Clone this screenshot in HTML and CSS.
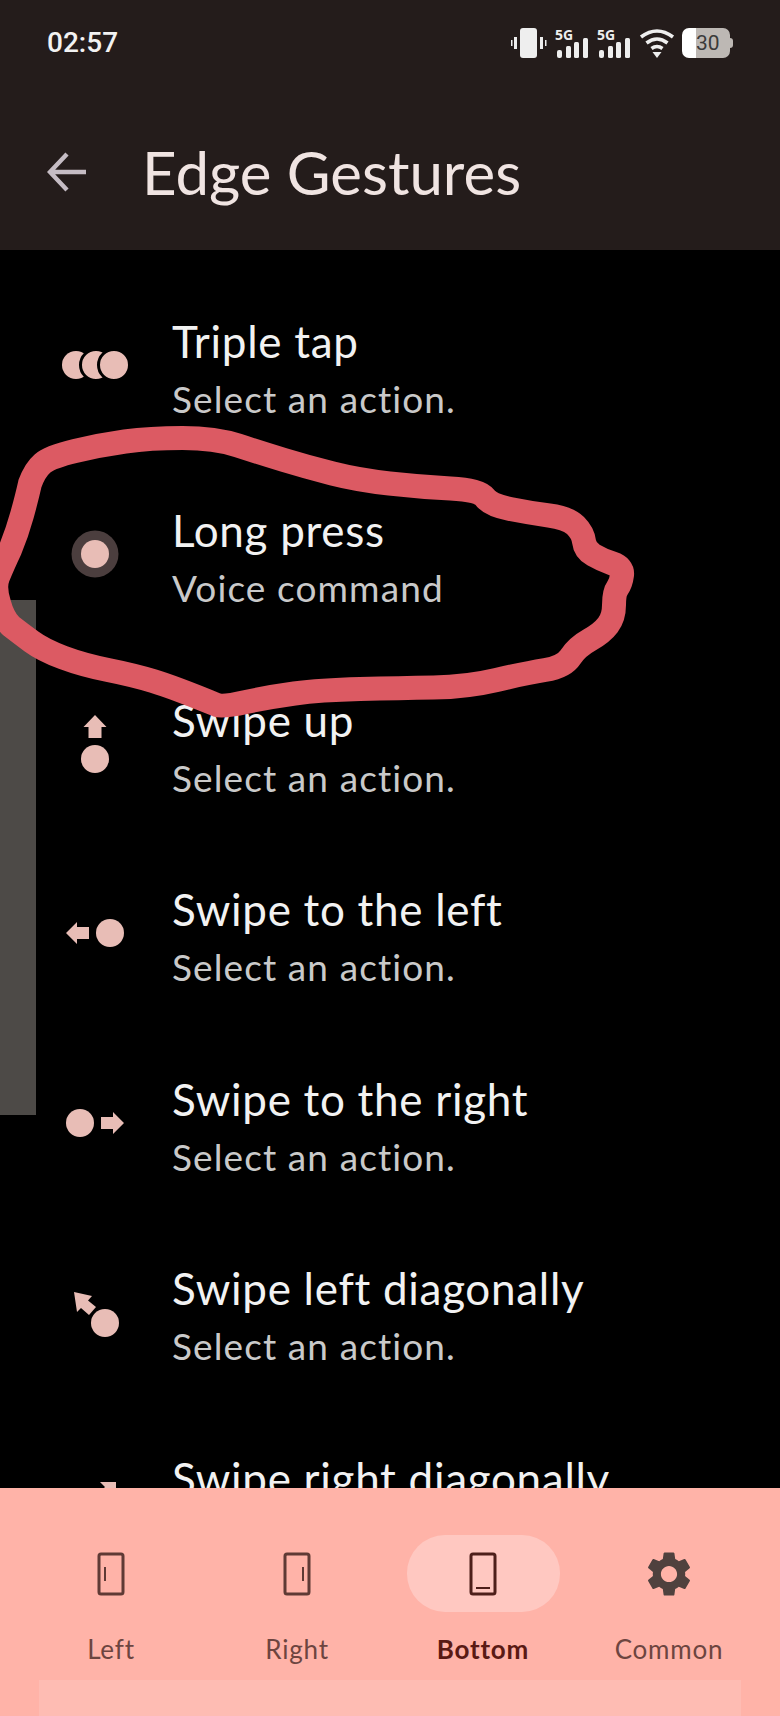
FILE: index.html
```html
<!DOCTYPE html>
<html lang="en">
<head>
    <meta charset="UTF-8">
    <meta name="viewport" content="width=device-width, initial-scale=1.0">
    <title>Edge Gestures</title>
    <link rel="stylesheet" href="styles.css">
</head>
<body>
    <header>
        <div class="status-bar">
            <span class="time">02:57</span>
            <div class="status-icons">
                <svg class="vibrate" width="36" height="30" viewBox="0 0 36 30">
                    <rect x="9" y="0" width="17" height="30" rx="3" fill="#eee"/>
                    <rect x="3" y="9" width="3" height="12" fill="#eee"/>
                    <rect x="0" y="12" width="1.5" height="6" fill="#eee"/>
                    <rect x="29" y="9" width="3" height="12" fill="#eee"/>
                    <rect x="34" y="12" width="1.5" height="6" fill="#eee"/>
                </svg>
                <div class="signal">
                    <span class="net-label">5G</span>
                    <svg width="34" height="30" viewBox="0 0 34 30">
                        <rect x="2" y="22" width="5" height="8" rx="2" fill="#eee"/>
                        <rect x="11" y="18" width="5" height="12" rx="1.5" fill="#eee"/>
                        <rect x="19" y="14" width="5" height="16" rx="1.5" fill="#eee"/>
                        <rect x="28" y="10" width="5" height="20" rx="1.5" fill="#eee"/>
                    </svg>
                </div>
                <div class="signal">
                    <span class="net-label">5G</span>
                    <svg width="34" height="30" viewBox="0 0 34 30">
                        <rect x="2" y="22" width="5" height="8" rx="2" fill="#eee"/>
                        <rect x="11" y="18" width="5" height="12" rx="1.5" fill="#eee"/>
                        <rect x="19" y="14" width="5" height="16" rx="1.5" fill="#eee"/>
                        <rect x="28" y="10" width="5" height="20" rx="1.5" fill="#eee"/>
                    </svg>
                </div>
                <svg class="wifi" width="36" height="30" viewBox="0 0 36 30">
                    <path d="M2 9 Q18 -3 34 9 M7.5 15 Q18 7 28.5 15 M12.5 20.5 Q18 16.5 23.5 20.5" fill="none" stroke="#eee" stroke-width="3.6"/>
                    <path d="M13.5 24 H22.5 L18 30 Z" fill="#eee"/>
                </svg>
                <div class="battery"><span>30</span></div>
            </div>
        </div>
        <div class="title-bar">
            <svg class="back" width="40" height="40" viewBox="0 0 40 40">
                <path d="M39 20 H3 M20 2 L3 20 L20 38" fill="none" stroke="#c5bcc4" stroke-width="4.4"/>
            </svg>
            <h1>Edge Gestures</h1>
        </div>
    </header>

    <main class="gesture-list">
        <div class="scrollbar"></div>

        <div class="row">
            <svg class="icon" width="80" height="64" viewBox="0 0 80 64">
                <circle cx="20" cy="32" r="14" fill="#e8bdb6"/>
                <circle cx="40" cy="32" r="15.5" fill="#e8bdb6" stroke="#000" stroke-width="3"/>
                <circle cx="58" cy="32" r="15.5" fill="#e8bdb6" stroke="#000" stroke-width="3"/>
            </svg>
            <div class="row-text"><div class="row-title">Triple tap</div><div class="row-sub">Select an action.</div></div>
        </div>

        <div class="row">
            <svg class="icon" width="80" height="64" viewBox="0 0 80 64">
                <circle cx="39" cy="32" r="23.5" fill="#4b3e3e"/>
                <circle cx="39" cy="32" r="14" fill="#e8bdb6"/>
            </svg>
            <div class="row-text"><div class="row-title">Long press</div><div class="row-sub">Voice command</div></div>
        </div>

        <div class="row">
            <svg class="icon" width="80" height="64" viewBox="0 0 80 64">
                <path d="M39 3 L50.5 15 H45.5 V26 H32.5 V15 H27.5 Z" fill="#e8bdb6"/>
                <circle cx="39" cy="47" r="14" fill="#e8bdb6"/>
            </svg>
            <div class="row-text"><div class="row-title">Swipe up</div><div class="row-sub">Select an action.</div></div>
        </div>

        <div class="row">
            <svg class="icon" width="80" height="64" viewBox="0 0 80 64">
                <path d="M10 32 L21 21 V26 H33 V38 H21 V43 Z" fill="#e8bdb6"/>
                <circle cx="54" cy="32" r="14" fill="#e8bdb6"/>
            </svg>
            <div class="row-text"><div class="row-title">Swipe to the left</div><div class="row-sub">Select an action.</div></div>
        </div>

        <div class="row">
            <svg class="icon" width="80" height="64" viewBox="0 0 80 64">
                <circle cx="24" cy="32" r="14" fill="#e8bdb6"/>
                <path d="M68 32 L57 21 V26 H45 V38 H57 V43 Z" fill="#e8bdb6"/>
            </svg>
            <div class="row-text"><div class="row-title">Swipe to the right</div><div class="row-sub">Select an action.</div></div>
        </div>

        <div class="row">
            <svg class="icon" width="80" height="64" viewBox="0 0 80 64">
                <path d="M18 12 L36 16 L32 20.5 L40 27 L33 35 L25 28 L21 32 Z" fill="#e8bdb6"/>
                <circle cx="49" cy="43" r="14" fill="#e8bdb6"/>
            </svg>
            <div class="row-text"><div class="row-title">Swipe left diagonally</div><div class="row-sub">Select an action.</div></div>
        </div>

        <div class="row">
            <svg class="icon" width="80" height="64" viewBox="0 0 80 64">
                <path d="M44 12 H60 V28 L55 23 L47 31 L41 25 L49 17 Z" fill="#e8bdb6"/>
                <circle cx="29" cy="43" r="14" fill="#e8bdb6"/>
            </svg>
            <div class="row-text"><div class="row-title">Swipe right diagonally</div><div class="row-sub">Select an action.</div></div>
        </div>
    </main>

    <nav class="tabs">
        <div class="tab">
            <div class="tab-icon">
                <svg width="28" height="44" viewBox="0 0 28 44">
                    <rect x="2" y="2" width="24" height="40" rx="2" fill="none" stroke="#5f3a35" stroke-width="3"/>
                    <rect x="7" y="15" width="2" height="14" fill="#5f3a35"/>
                </svg>
            </div>
            <span>Left</span>
        </div>
        <div class="tab">
            <div class="tab-icon">
                <svg width="28" height="44" viewBox="0 0 28 44">
                    <rect x="2" y="2" width="24" height="40" rx="2" fill="none" stroke="#5f3a35" stroke-width="3"/>
                    <rect x="19" y="15" width="2" height="14" fill="#5f3a35"/>
                </svg>
            </div>
            <span>Right</span>
        </div>
        <div class="tab active">
            <div class="tab-icon">
                <svg width="28" height="44" viewBox="0 0 28 44">
                    <rect x="2" y="2" width="24" height="40" rx="2" fill="none" stroke="#4e1f1a" stroke-width="3"/>
                    <rect x="7" y="35" width="14" height="2" fill="#4e1f1a"/>
                </svg>
            </div>
            <span>Bottom</span>
        </div>
        <div class="tab">
            <div class="tab-icon">
                <svg width="54" height="54" viewBox="0 0 24 24">
                    <path fill="#4f413e" d="M19.14 12.94c.04-.3.06-.61.06-.94 0-.32-.02-.64-.07-.94l2.03-1.58c.18-.14.23-.41.12-.61l-1.92-3.32c-.12-.22-.37-.29-.59-.22l-2.39.96c-.5-.38-1.03-.7-1.62-.94l-.36-2.54c-.04-.24-.24-.41-.48-.41h-3.84c-.24 0-.43.17-.47.41l-.36 2.54c-.59.24-1.13.57-1.62.94l-2.39-.96c-.22-.08-.47 0-.59.22L2.74 8.87c-.12.21-.08.47.12.61l2.03 1.58c-.05.3-.09.63-.09.94s.02.64.07.94l-2.03 1.58c-.18.14-.23.41-.12.61l1.92 3.32c.12.22.37.29.59.22l2.39-.96c.5.38 1.03.7 1.62.94l.36 2.54c.05.24.24.41.48.41h3.84c.24 0 .44-.17.47-.41l.36-2.54c.59-.24 1.13-.56 1.62-.94l2.39.96c.22.08.47 0 .59-.22l1.92-3.32c.12-.22.07-.47-.12-.61l-2.01-1.58zM12 15.6c-1.98 0-3.6-1.62-3.6-3.6s1.62-3.6 3.6-3.6 3.6 1.62 3.6 3.6-1.62 3.6-3.6 3.6z"/>
                </svg>
            </div>
            <span>Common</span>
        </div>
        <div class="ad-slot"></div>
    </nav>

    <!-- marker scribble drawn over the screenshot -->
    <svg class="scribble" width="780" height="1716" viewBox="0 0 780 1716">
        <path d="M217 705 Q173 687 153 681 Q133 675 108 670 Q83 665 63 657.5 Q43 650 31.5 641.5 Q20 633 11 626 Q3 618 -1 603 Q-6 587 -2 577 Q3 565 10 550 Q17 533 22 515 Q27 497 30 483.5 Q35 470 42.5 463.5 Q50 457 75 451 Q100 445 125 441.5 Q150 438 182.5 438 Q215 438 238 445.5 Q261 453 284 460 Q307 467 332.5 473.5 Q358 480 389.5 483.5 Q421 487 450.5 488.5 Q480 490 485 497.5 Q490 505 510 509 Q530 513 549 515.5 Q568 518 575.5 525.5 Q583 533 584 541.5 Q585 550 593.5 555 Q602 560 612.5 563.5 Q623 567 622 575 Q621 583 617.5 588 Q614 593 614 605 Q614 617 608 625 Q602 633 589.5 640 Q577 647 570.5 657 Q564 667 545 670 Q526 673 496.5 680 Q467 687 433.5 687.5 Q400 688 360 689 Q320 690 294.5 693.5 Q269 697 246 702 Q223 707 217 705" fill="none" stroke="#dc5a63" stroke-width="24" stroke-linejoin="round" stroke-linecap="round"/>
    </svg>
</body>
</html>
```

FILE: styles.css
```css
html, body {
    margin: 0;
    padding: 0;
}

body {
    position: relative;
    display: flex;
    flex-direction: column;
    width: 780px;
    height: 1716px;
    overflow: hidden;
    background: #000;
    font-family: Lato, "Noto Sans", sans-serif;
}

header {
    height: 250px;
    box-sizing: border-box;
    padding: 28px 47px 0 47px;
    background: #241c1b;
}

.status-bar {
    display: flex;
    justify-content: space-between;
    align-items: center;
    height: 30px;
}

.time {
    font-family: Roboto, sans-serif;
    font-size: 28px;
    font-weight: 500;
    line-height: 28px;
    color: #f2f2f2;
}

.status-icons {
    display: flex;
    align-items: center;
    gap: 8px;
}

.signal {
    position: relative;
    width: 34px;
    height: 30px;
}

.signal svg {
    display: block;
}

.net-label {
    position: absolute;
    top: 0;
    left: 0;
    font-family: "Noto Sans", sans-serif;
    font-size: 14px;
    font-weight: 700;
    line-height: 14px;
    color: #eee;
}

.wifi {
    margin-right: -1px;
}

.battery {
    position: relative;
    box-sizing: border-box;
    width: 48px;
    height: 30px;
    margin-right: 3px;
    padding-left: 14px;
    border-radius: 7px;
    background: linear-gradient(to right, #fff 14px, #bdb8b4 14px);
    font-family: Roboto, sans-serif;
    font-size: 21px;
    line-height: 30px;
    color: #3a3a3a;
}

.battery::after {
    content: "";
    position: absolute;
    top: 10px;
    right: -3px;
    width: 3px;
    height: 10px;
    border-radius: 0 3px 3px 0;
    background: #bdb8b4;
}

.title-bar {
    display: flex;
    align-items: center;
    gap: 55px;
    margin-top: 78px;
    height: 72px;
}

h1 {
    margin: 0;
    font-size: 60px;
    font-weight: 400;
    color: #f0e4e2;
}

.gesture-list {
    position: relative;
    flex: 1;
    overflow: hidden;
    padding-top: 20px;
}

.scrollbar {
    position: absolute;
    top: 350px;
    left: 0;
    width: 36px;
    height: 515px;
    background: #4d4a47;
}

.row {
    display: flex;
    align-items: center;
    height: 189.5px;
}

.icon {
    flex: none;
    margin-left: 56px;
    margin-right: 36px;
}

.row-text {
    padding-top: 10px;
}

.row-title {
    font-size: 44px;
    line-height: 57px;
    letter-spacing: 0.7px;
    color: #f2f2f2;
}

.row-sub {
    font-size: 37px;
    line-height: 57px;
    letter-spacing: 1.1px;
    color: #c9c9c9;
}

.tabs {
    position: relative;
    display: grid;
    grid-template-columns: repeat(4, 186px);
    align-content: start;
    justify-content: center;
    flex: none;
    height: 228px;
    box-sizing: border-box;
    padding-top: 47px;
    background: #ffb3a8;
}

.tab {
    display: flex;
    flex-direction: column;
    align-items: center;
    font-size: 26px;
    letter-spacing: 0.8px;
    color: #6d4540;
}

.tab-icon {
    display: flex;
    align-items: center;
    justify-content: center;
    width: 153px;
    height: 77px;
    margin-bottom: 21px;
    border-radius: 38px;
}

.tab.active {
    font-weight: 700;
    color: #5a1a14;
}

.tab.active .tab-icon {
    background: #ffc8c1;
}

.ad-slot {
    position: absolute;
    left: 39px;
    right: 39px;
    top: 192px;
    bottom: 0;
    background: #febcb3;
}

.scribble {
    position: absolute;
    top: 0;
    left: 0;
}
```
